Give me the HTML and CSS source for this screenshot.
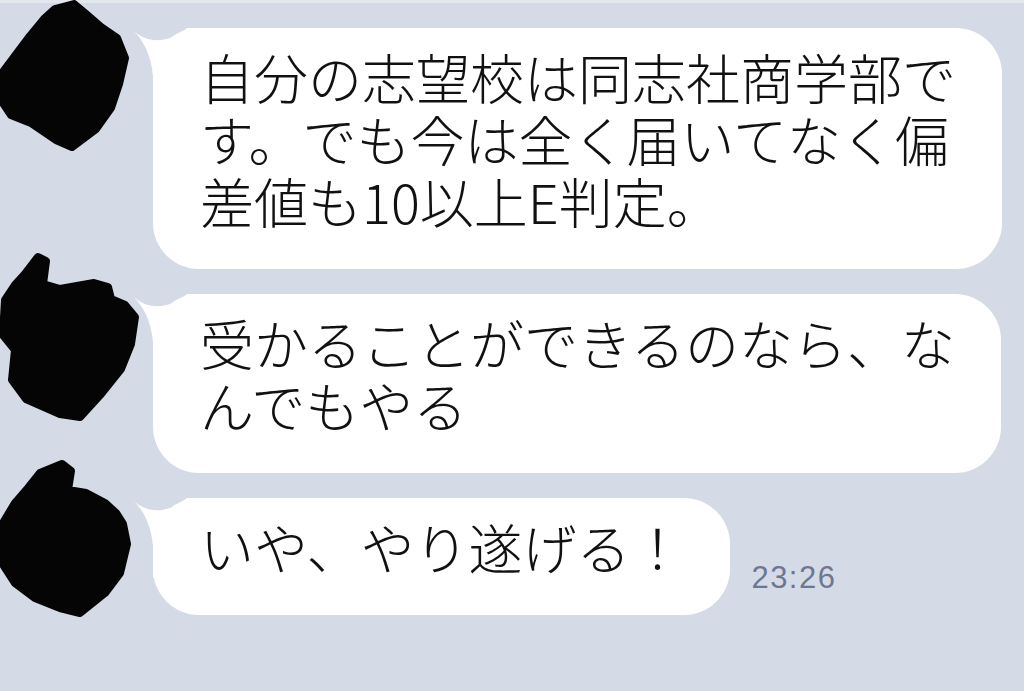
FILE: index.html
```html
<!DOCTYPE html>
<html lang="ja">
<head>
<meta charset="utf-8">
<title>Chat</title>
<link rel="stylesheet" href="styles.css">
</head>
<body>
<div class="topstrip"></div>
<main class="chat">
  <div class="row">
    <div class="avatar">
      <svg class="blob b1" viewBox="0 0 153 170" width="153" height="170">
        <path d="M55 9 L74 4 L86 14 L101 27 L117 38 L125 58 L119 84 L111 108 L96 129 L72 147 L56 140 L31 123 L11 115 L1 100 L3 72 L15 56 L30 36 L44 19 Z"/>
      </svg>
    </div>
    <div class="bubble">
      <svg class="tail" viewBox="0 0 80 80" width="80" height="80"><path d="M2 2 C14 14 34 18 56 0 L80 0 L80 80 L22 80 L22 48 C20 26 12 12 2 2 Z"/></svg>
      <p class="msg">自分の志望校は同志社商学部で<br>す。でも今は全く届いてなく偏<br>差値も10以上E判定。</p>
    </div>
  </div>
  <div class="row">
    <div class="avatar">
      <svg class="blob b2" viewBox="0 250 153 180" width="153" height="180">
        <path d="M38 258 L46 262 L43 285 L60 290 L94 284 L108 288 L111 300 L125 306 L135 318 L131 345 L121 370 L101 395 L80 418 L60 415 L26 400 L12 381 L15 351 L3 336 L5 301 L15 286 L25 275 Z"/>
      </svg>
    </div>
    <div class="bubble">
      <svg class="tail" viewBox="0 0 80 80" width="80" height="80"><path d="M2 2 C14 14 34 18 56 0 L80 0 L80 80 L22 80 L22 48 C20 26 12 12 2 2 Z"/></svg>
      <p class="msg">受かることができるのなら、な<br>んでもやる</p>
    </div>
  </div>
  <div class="row">
    <div class="avatar">
      <svg class="blob b3" viewBox="0 455 153 170" width="153" height="170">
        <path d="M40 470 L62 461 L71 468 L68 487 L86 490 L105 500 L116 510 L123 521 L127 541 L120 570 L105 590 L80 610 L60 605 L35 595 L15 580 L2 560 L0 525 L15 500 L28 485 Z"/>
      </svg>
    </div>
    <div class="bubble">
      <svg class="tail" viewBox="0 0 80 80" width="80" height="80"><path d="M2 2 C14 14 34 18 56 0 L80 0 L80 80 L22 80 L22 48 C20 26 12 12 2 2 Z"/></svg>
      <p class="msg">いや、やり遂げる！</p>
    </div>
    <span class="time">23:26</span>
  </div>
</main>
</body>
</html>
```

FILE: styles.css
```css
html, body {
  margin: 0;
  padding: 0;
  background: #d5dbe6;
  width: 1024px;
  height: 691px;
  overflow: hidden;
}

.topstrip {
  height: 3px;
  background: #e3e7ee;
}

.chat {
  display: flex;
  flex-direction: column;
  gap: 25px;
  padding-top: 25px;
}

.row {
  display: flex;
  align-items: flex-end;
}

.avatar {
  width: 153px;
  height: 0;
  flex: none;
  align-self: flex-start;
}

.blob {
  display: block;
}

.blob path {
  fill: #050505;
  stroke: #050505;
  stroke-width: 8;
  stroke-linejoin: round;
}

.b1 { margin-top: -28px; }
.b2 { margin-top: -45px; }
.b3 { margin-top: -40px; }

.bubble {
  position: relative;
  background: #ffffff;
  border-radius: 46px;
  padding: 18px 46px 37px 47px;
}

.tail {
  position: absolute;
  left: -22px;
  top: 0;
  display: block;
}

.tail path {
  fill: #ffffff;
}

.msg {
  position: relative;
  margin: 0;
  font-family: "Noto Sans CJK JP", "Noto Sans", sans-serif;
  font-size: 54px;
  font-weight: 300;
  line-height: 62px;
  color: #111111;
  white-space: nowrap;
}

.time {
  margin-left: 21px;
  margin-bottom: 22px;
  font-family: "Liberation Sans", Arial, sans-serif;
  font-size: 31px;
  line-height: 31px;
  letter-spacing: 1.5px;
  color: #6e7790;
}
```
